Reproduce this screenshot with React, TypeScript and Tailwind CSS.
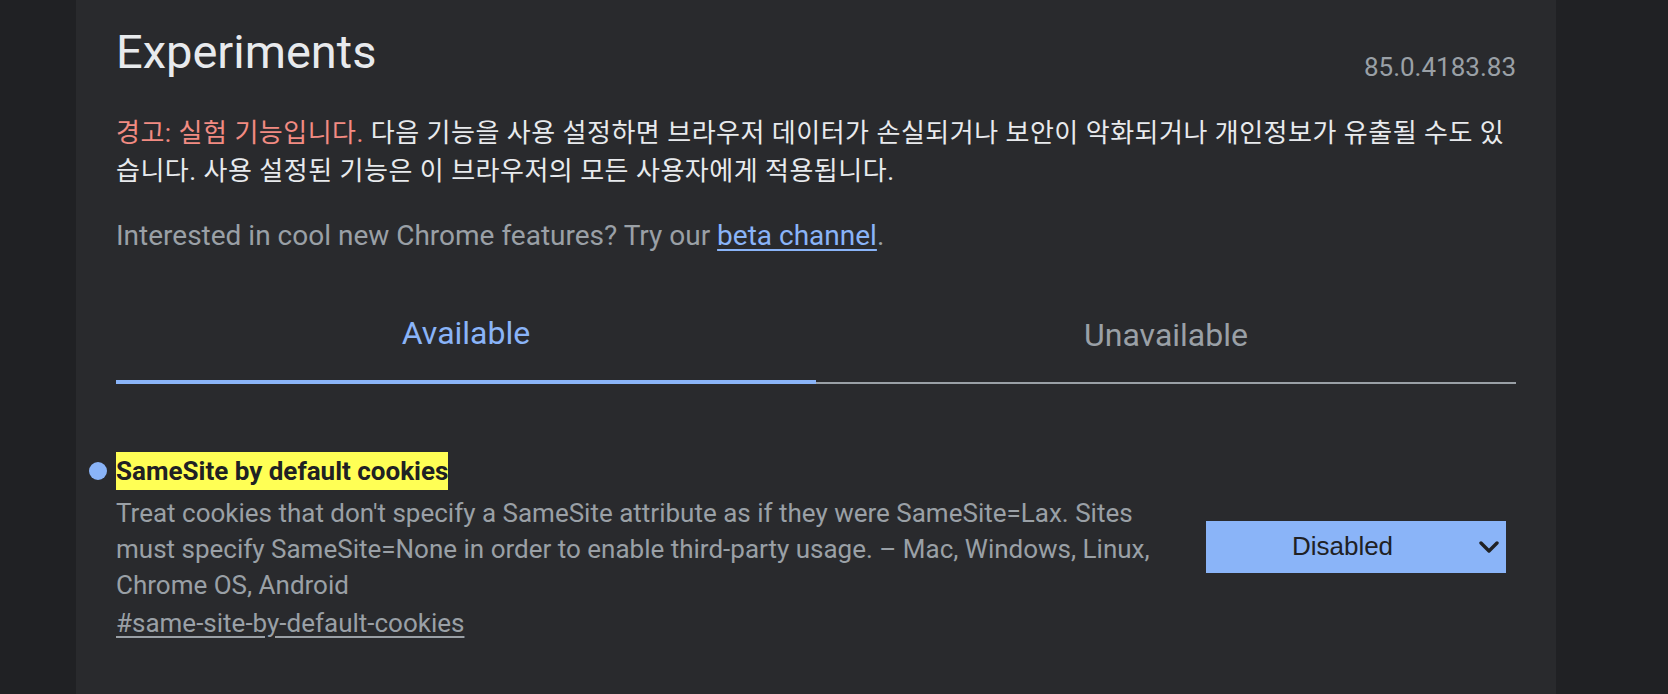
export default function App() {
  return (
    <div className="h-[694px] w-[1668px] overflow-hidden bg-[#202124] font-[Roboto,'Noto_Sans_CJK_KR',sans-serif]">
      <div className="ml-[76px] h-full w-[1480px] bg-[#292a2d] px-[40px] pt-[24px]">
        <div className="flex items-start justify-between">
          <h1 className="text-[47px] font-normal leading-[56px] text-[#e8eaed]">Experiments</h1>
          <div className="mt-[28px] text-[26px] leading-[30px] text-[#9aa0a6]">85.0.4183.83</div>
        </div>
        <p className="mt-[32px] text-[26px] leading-[38px] tracking-[0.5px] text-[#e8eaed]">
          <span className="text-[#f28b82]">경고: 실험 기능입니다.</span>
          <span> 다음 기능을 사용 설정하면 브라우저 데이터가 손실되거나 보안이 악화되거나 개인정보가 유출될 수도 있</span>
          <span>습니다. 사용 설정된 기능은 이 브라우저의 모든 사용자에게 적용됩니다.</span>
        </p>
        <p className="mt-[27px] text-[28px] leading-[38px] text-[#9aa0a6]">
          Interested in cool new Chrome features? Try our{" "}
          <a className="text-[#8ab4f8] underline underline-offset-[4px]">beta channel</a>.
        </p>
        <div className="mt-[58px] flex items-end">
          <div className="flex-1 border-b-4 border-[#8ab4f8] pb-[27px] text-center text-[32px] leading-[40px] text-[#8ab4f8]">
            Available
          </div>
          <div className="flex-1 border-b-2 border-[#9aa0a6] pb-[27px] text-center text-[32px] leading-[40px] text-[#9aa0a6]">
            Unavailable
          </div>
        </div>
        <div className="mt-[68px] flex items-center pr-[10px]">
          <div className="relative flex-1 pr-[30px]">
            <span className="absolute left-[-27px] top-[10px] h-[18px] w-[18px] rounded-full bg-[#8ab4f8]" />
            <div className="h-[38px]">
              <span className="inline-block bg-[#ffff55] text-[26px] font-bold leading-[38px] text-[#202124]">
                SameSite by default cookies
              </span>
            </div>
            <p className="mt-[5px] text-[26px] leading-[36px] text-[#9aa0a6]">
              Treat cookies that don't specify a SameSite attribute as if they were SameSite=Lax. Sites must specify SameSite=None in order to enable third-party usage. – Mac, Windows, Linux, Chrome OS, Android
            </p>
            <a className="mt-[2px] inline-block text-[26px] leading-[36px] text-[#9aa0a6] underline underline-offset-[4px]">
              #same-site-by-default-cookies
            </a>
          </div>
          <div className="flex h-[52px] w-[300px] shrink-0 items-center bg-[#8ab4f8] text-[#202124]">
            <span className="flex-1 text-center font-['Liberation_Sans',Arial,sans-serif] text-[26px]">Disabled</span>
            <svg width="20" height="12" viewBox="0 0 20 12" className="mr-[7px]">
              <polyline points="2,2 10,10 18,2" fill="none" stroke="#202124" strokeWidth="3.4" strokeLinecap="round" strokeLinejoin="round" />
            </svg>
          </div>
        </div>
      </div>
    </div>
  );
}
